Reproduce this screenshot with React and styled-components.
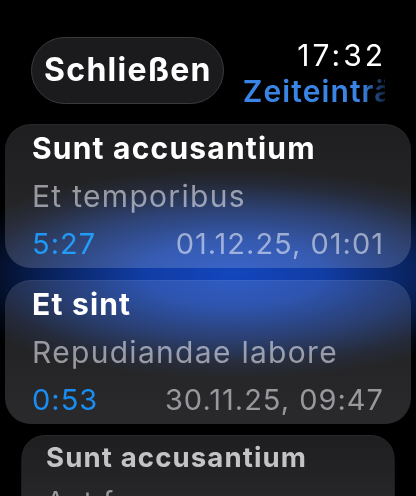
import styled, { createGlobalStyle } from 'styled-components';

const GlobalStyle = createGlobalStyle`
  html, body {
    margin: 0;
    padding: 0;
    background: #000;
  }
  body {
    font-family: Inter, "Noto Sans", "Liberation Sans", sans-serif;
    -webkit-font-smoothing: antialiased;
  }
`;

const Screen = styled.div`
  position: relative;
  width: 416px;
  height: 496px;
  overflow: hidden;
  background: #000;
  color: #fff;
`;

const Header = styled.header`
  display: flex;
  align-items: flex-start;
  padding: 37px 0 0 31px;
`;

const CloseButton = styled.button`
  flex: none;
  height: 67px;
  padding: 0 11px 2px 12px;
  border-radius: 34px;
  border: 1.5px solid #3a3a3c;
  background: #1b1b1d;
  color: #fff;
  font-family: inherit;
  font-size: 32px;
  font-weight: 700;
  letter-spacing: 1.3px;
`;

const TitleBlock = styled.div`
  flex: 1;
  min-width: 0;
  display: flex;
  flex-direction: column;
  margin-left: 19px;
`;

const Clock = styled.div`
  align-self: flex-end;
  padding-right: 30px;
  font-size: 30px;
  font-weight: 400;
  letter-spacing: 3px;
  line-height: 32px;
  margin-top: 2px;
`;

const PageTitle = styled.div`
  margin: 2px 31px 0 0;
  white-space: nowrap;
  overflow: hidden;
  font-size: 30px;
  font-weight: 600;
  letter-spacing: 1.1px;
  line-height: 36px;
  color: #3a84e6;
  -webkit-mask-image: linear-gradient(to right, #000 84%, rgba(0, 0, 0, 0.25) 100%);
  mask-image: linear-gradient(to right, #000 84%, rgba(0, 0, 0, 0.25) 100%);
`;

const List = styled.div`
  position: relative;
  display: flex;
  flex-direction: column;
  gap: 12px;
  margin-top: 15px;
`;

const Card = styled.div`
  margin: 0 5px;
  padding: 0 28px 0 27px;
  border-radius: 26px;
  background: linear-gradient(180deg, #1e1e20 0%, #2a2a2c 100%);
  box-shadow: inset 0 1px 0 rgba(255, 255, 255, 0.05);
  transform: scale(${(p) => (p.$far ? 0.92 : 1)});
  transform-origin: top center;
  margin-top: ${(p) => (p.$far ? -1 : 0)}px;
`;

const CardTitle = styled.div`
  font-size: 30px;
  font-weight: 700;
  letter-spacing: 1.2px;
  line-height: 48px;
  color: ${(p) => (p.$far ? '#c4c4c6' : '#fff')};
  white-space: nowrap;
`;

const CardSubtitle = styled.div`
  font-size: 30px;
  font-weight: 400;
  letter-spacing: 1.3px;
  line-height: 48px;
  color: #98989d;
  white-space: nowrap;
`;

const MetaRow = styled.div`
  display: flex;
  justify-content: space-between;
  align-items: baseline;
  font-size: 29px;
  letter-spacing: 1px;
  line-height: 48px;
  white-space: nowrap;
`;

const Duration = styled.span`
  color: #1a8df2;
`;

const Stamp = styled.span`
  color: #98989d;
  margin-right: -1px;
`;

const Glow = styled.div`
  position: absolute;
  left: -100px;
  right: -100px;
  top: 30px;
  height: 240px;
  pointer-events: none;
  background: radial-gradient(
    ellipse 300px 105px at 54% 50%,
    rgba(20, 74, 200, 0.95) 0%,
    rgba(20, 74, 200, 0.82) 30%,
    rgba(20, 74, 200, 0.45) 62%,
    rgba(20, 74, 200, 0.12) 85%,
    rgba(20, 74, 200, 0) 100%
  );
  mix-blend-mode: screen;
`;

const entries = [
  {
    title: 'Sunt accusantium',
    note: 'Et temporibus',
    duration: '5:27',
    stamp: '01.12.25, 01:01',
  },
  {
    title: 'Et sint',
    note: 'Repudiandae labore',
    duration: '0:53',
    stamp: '30.11.25, 09:47',
  },
];

const App = () => (
  <>
    <GlobalStyle />
    <Screen>
      <Header>
        <CloseButton>Schließen</CloseButton>
        <TitleBlock>
          <Clock>17:32</Clock>
          <PageTitle>Zeiteinträge</PageTitle>
        </TitleBlock>
      </Header>
      <List>
        {entries.map((entry) => (
          <Card key={entry.stamp}>
            <CardTitle>{entry.title}</CardTitle>
            <CardSubtitle>{entry.note}</CardSubtitle>
            <MetaRow>
              <Duration>{entry.duration}</Duration>
              <Stamp>{entry.stamp}</Stamp>
            </MetaRow>
          </Card>
        ))}
        <Card $far>
          <CardTitle $far>Sunt accusantium</CardTitle>
          <CardSubtitle $far>Aut facere</CardSubtitle>
        </Card>
        <Glow />
      </List>
    </Screen>
  </>
);

export default App;
